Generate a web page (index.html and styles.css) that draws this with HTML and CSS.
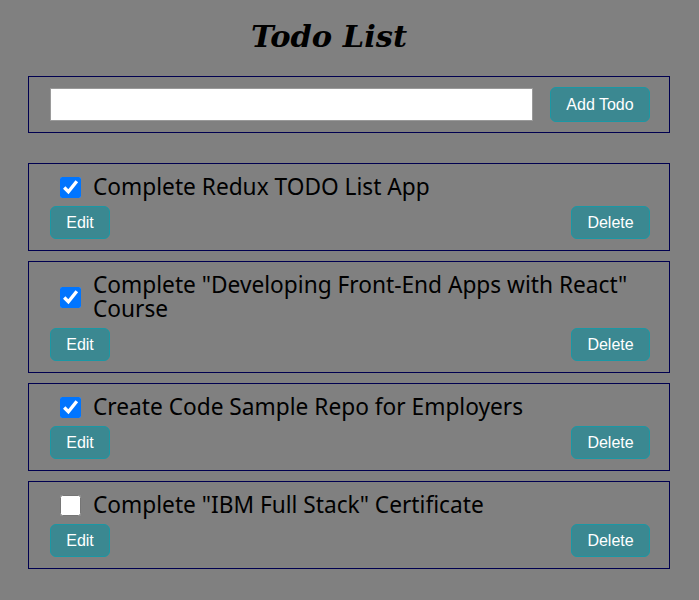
FILE: index.html
```html
<!DOCTYPE html>
<html>
<head>
<meta charset="utf-8">
<link rel="stylesheet" href="styles.css">
</head>
<body>
<main class="app">
  <h1 class="title">Todo List</h1>
  <form class="add-form">
    <input class="add-input" type="text">
    <button class="btn btn-add" type="button">Add Todo</button>
  </form>
  <ul class="todos">
    <li class="todo">
      <label class="todo-row"><input class="check" type="checkbox" checked><span class="todo-text">Complete Redux TODO List App</span></label>
      <div class="todo-actions"><button class="btn btn-edit" type="button">Edit</button><button class="btn btn-delete" type="button">Delete</button></div>
    </li>
    <li class="todo">
      <label class="todo-row"><input class="check" type="checkbox" checked><span class="todo-text">Complete "Developing Front-End Apps with React" Course</span></label>
      <div class="todo-actions"><button class="btn btn-edit" type="button">Edit</button><button class="btn btn-delete" type="button">Delete</button></div>
    </li>
    <li class="todo">
      <label class="todo-row"><input class="check" type="checkbox" checked><span class="todo-text">Create Code Sample Repo for Employers</span></label>
      <div class="todo-actions"><button class="btn btn-edit" type="button">Edit</button><button class="btn btn-delete" type="button">Delete</button></div>
    </li>
    <li class="todo">
      <label class="todo-row"><input class="check" type="checkbox"><span class="todo-text">Complete "IBM Full Stack" Certificate</span></label>
      <div class="todo-actions"><button class="btn btn-edit" type="button">Edit</button><button class="btn btn-delete" type="button">Delete</button></div>
    </li>
  </ul>
</main>
</body>
</html>
```
FILE: styles.css
```css
html, body {
  margin: 0;
  padding: 0;
  background: #808080;
}
body {
  font-family: "Liberation Sans", Arial, sans-serif;
}
.app {
  padding: 0 29px 0 28px;
}
.title {
  margin: 0;
  padding: 16px 40px 0 0;
  height: 60px;
  box-sizing: border-box;
  text-align: center;
  font-family: "DejaVu Serif", "Liberation Serif", serif;
  font-style: italic;
  font-weight: bold;
  font-size: 30.5px;
  line-height: 40px;
  color: #000;
}
.add-form {
  margin: 16px 0 0;
  border: 1px solid #000050;
  padding: 10px 19px 10px 21px;
  display: flex;
  align-items: center;
  gap: 17px;
}
.add-input {
  flex: 1;
  height: 33px;
  box-sizing: border-box;
  border: 1px solid #9a9a9a;
  background: #fff;
  margin: 0;
  padding: 0 4px;
}
.btn {
  font-family: "Liberation Sans", Arial, sans-serif;
  font-size: 16px;
  color: #fff;
  background: #3b8891;
  border: 1px solid #1b97a4;
  border-radius: 6px;
  height: 33px;
  padding: 0 12px;
  margin: 0;
  cursor: pointer;
}
.btn-add {
  width: 100px;
  height: 35px;
}
.btn-edit {
  width: 60px;
}
.btn-delete {
  width: 79px;
}
.todos {
  list-style: none;
  margin: 30px 0 0;
  padding: 0;
  display: flex;
  flex-direction: column;
  gap: 10px;
}
.todo {
  border: 1px solid #000050;
  padding: 11px 19px 11px 21px;
}
.todo-row {
  display: flex;
  align-items: center;
  padding-left: 10px;
  gap: 12px;
}
.check {
  width: 21px;
  height: 21px;
  margin: 0;
  flex: none;
}
.todo-text {
  font-family: "Noto Sans", "Open Sans", sans-serif;
  font-size: 22.7px;
  line-height: 24px;
  color: #000;
}
.todo-actions {
  display: flex;
  justify-content: space-between;
  margin-top: 7px;
}
```
